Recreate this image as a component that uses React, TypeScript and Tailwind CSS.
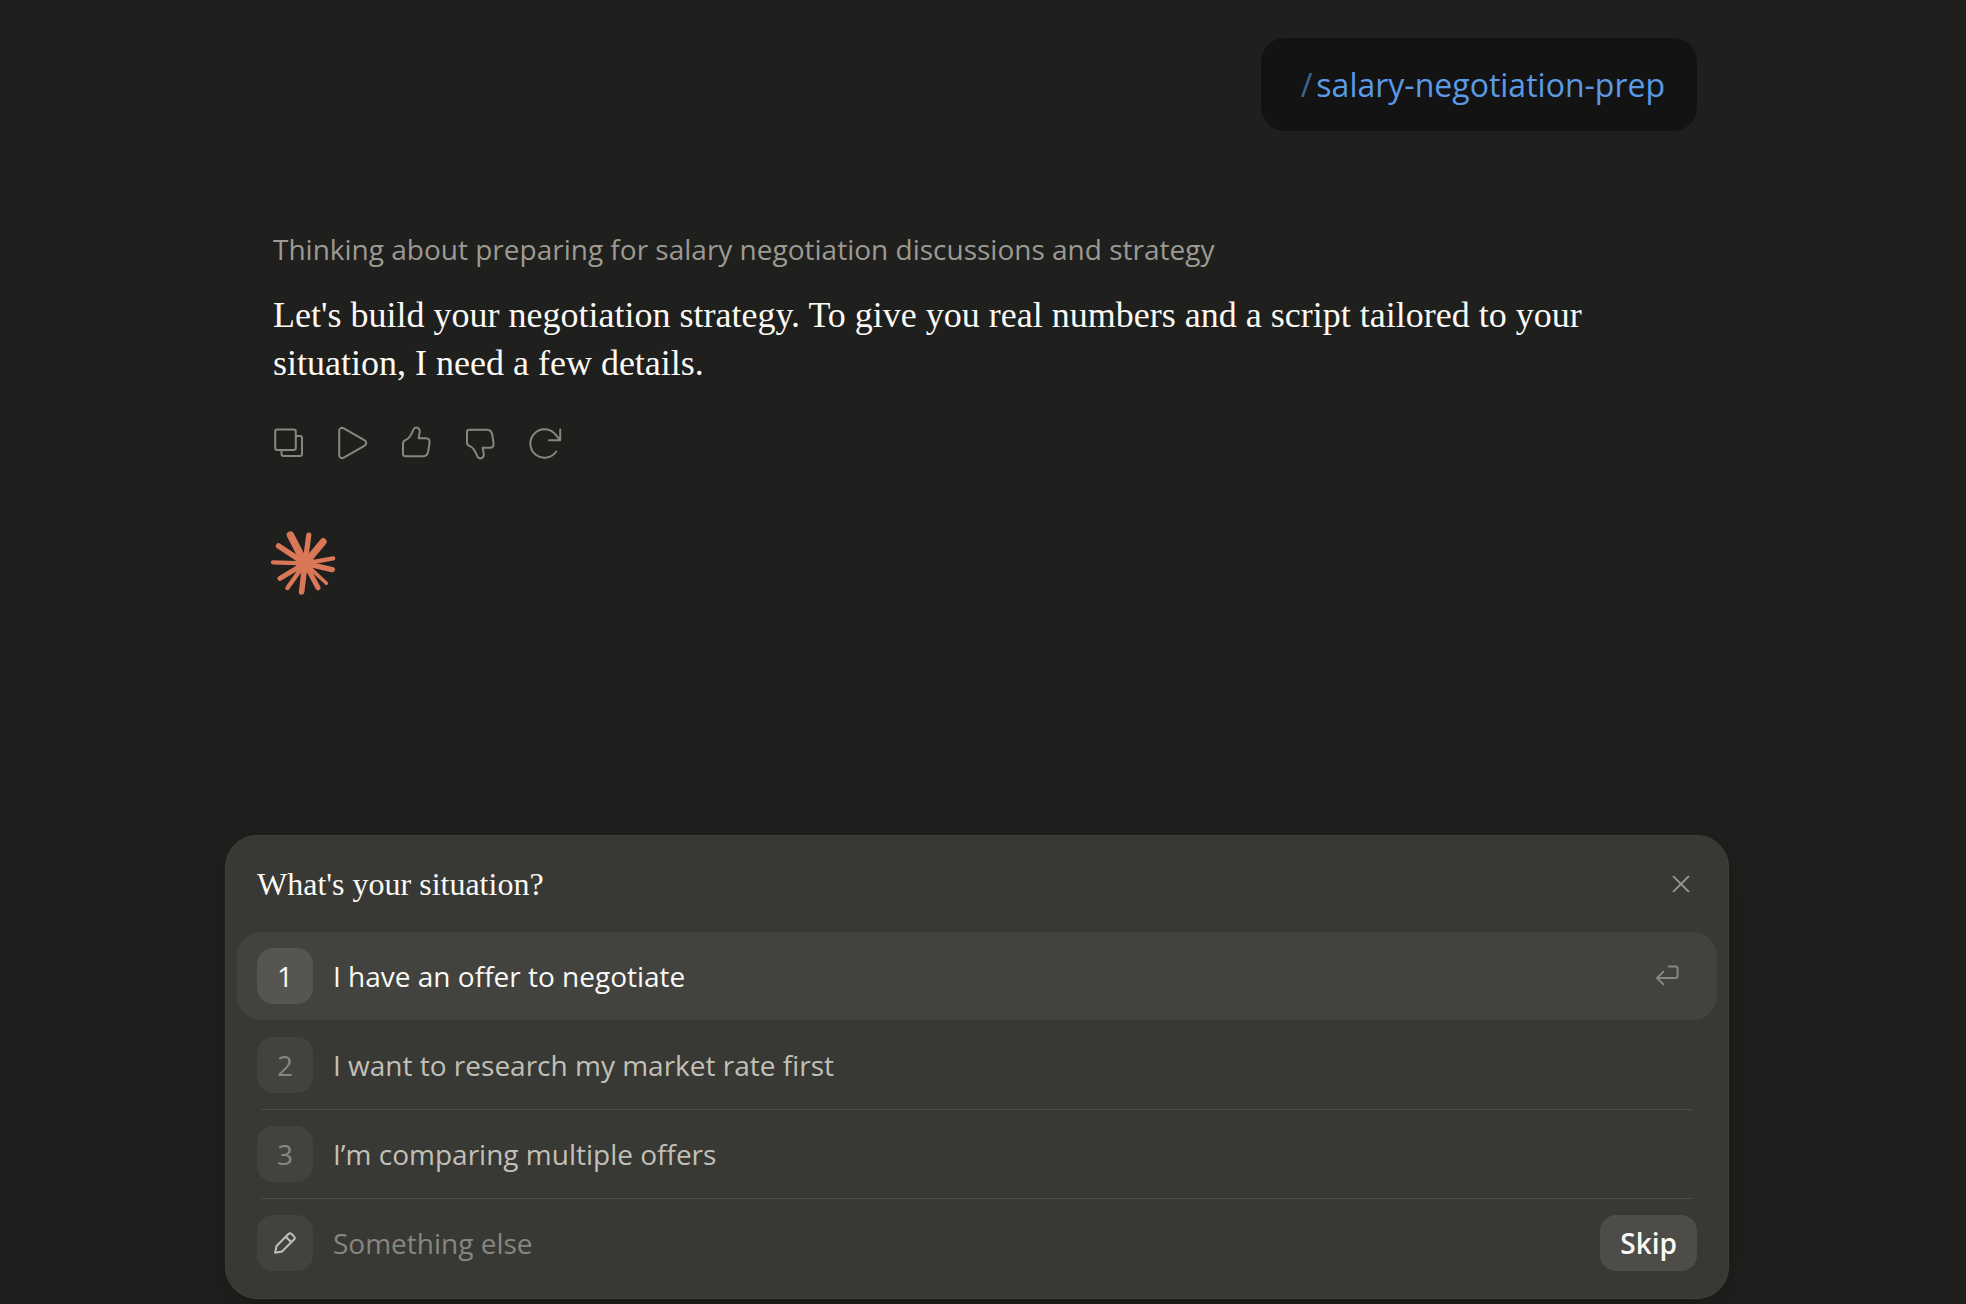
import React from 'react';

const OPTIONS = [
  { id: 1, label: 'I have an offer to negotiate' },
  { id: 2, label: 'I want to research my market rate first' },
  { id: 3, label: 'I\u2019m comparing multiple offers' },
];

const THUMB =
  'M2 27V16.5C2 14.4 3.4 13.2 5.4 12.6C8.6 11.4 10.4 7.4 12.4 2.6C13 1.2 14 .6 15.2 .6C18 .6 19.2 3 18.7 5.6L17.6 11.2H25C27.8 11.2 29 13.4 28.5 16.2L27.3 23.8C26.8 27.4 25 29.3 22 29.3H4.6C2.9 29.3 2 28.6 2 27Z';

const ACTIONS = [
  {
    label: 'Copy',
    icon: (
      <>
        <rect x="2.2" y="2.5" width="20.6" height="20.4" rx="2" />
        <path d="M23 9h4a2 2 0 0 1 2 2v16a2 2 0 0 1-2 2H10.5a2 2 0 0 1-2-2v-4" />
      </>
    ),
  },
  {
    label: 'Play',
    icon: (
      <path d="M2.2 3.8C2.2 1.2 4.6 .2 6.8 1.4L27.7 13.4C29.7 14.6 29.7 17.4 27.7 18.6L6.8 30.6C4.6 31.8 2.2 30.8 2.2 28.2Z" />
    ),
  },
  { label: 'Good response', icon: <path d={THUMB} /> },
  { label: 'Bad response', icon: <path d={THUMB} transform="matrix(1 0 0 -1 0 32)" /> },
  {
    label: 'Retry',
    icon: <path d="M27.3 24.5A14.2 14.2 0 1 1 25.7 6.6L31.2 13.2M31.2 2.4V13.2H20" />,
  },
];

// x, y of the tip and thickness of each ray
const RAYS = [
  [19.4, 4, 7.4],
  [37.8, 4.2, 5.2],
  [52.2, 10.8, 7],
  [62.2, 27.4, 4.2],
  [61.2, 38.6, 5.4],
  [55.4, 52.2, 3.6],
  [47, 56.8, 5],
  [30.6, 61, 5.6],
  [16.4, 57, 4.4],
  [9, 47.4, 5],
  [2, 31.4, 4.2],
  [7.6, 15, 5.6],
];

function Spark() {
  return (
    <svg viewBox="0 0 64 64" className="-ml-0.5 size-16 overflow-visible" stroke="#d97757" strokeLinecap="round">
      <circle cx="34" cy="32.4" r="9.4" fill="#d97757" stroke="none" />
      {RAYS.map(([x, y, w]) => (
        <line key={`${x}-${y}`} x1="34" y1="32.4" x2={x} y2={y} strokeWidth={w} />
      ))}
    </svg>
  );
}

function Message() {
  return (
    <div className="pl-4">
      <p className="text-[28px] leading-10 text-[#9c9a92]">
        Thinking about preparing for salary negotiation discussions and strategy
      </p>
      <p className="mt-[22px] font-['Liberation_Serif',serif] text-[36px] leading-12 text-[#faf9f5]">
        Let's build your negotiation strategy. To give you real numbers and a script tailored to your
        situation, I need a few details.
      </p>
      <div className="mt-6 -ml-4 flex">
        {ACTIONS.map(action => (
          <button key={action.label} aria-label={action.label} className="flex size-16 items-center justify-center">
            <svg
              viewBox="0 0 32 32"
              className="size-8 overflow-visible"
              fill="none"
              stroke="#87867f"
              strokeWidth="2"
              strokeLinecap="round"
              strokeLinejoin="round"
            >
              {action.icon}
            </svg>
          </button>
        ))}
      </div>
    </div>
  );
}

function QuestionPanel() {
  return (
    <section className="-mx-8 rounded-[32px] border border-[#40403b] bg-[#383834] px-[11px] pb-[11px] shadow-[0_8px_32px_rgba(0,0,0,0.2)]">
      <header className="flex h-24 items-center justify-between px-5">
        <h2 className="font-['Liberation_Serif',serif] text-[32px] leading-10 text-[#faf9f5]">
          What's your situation?
        </h2>
        <button aria-label="Close" className="flex size-8 items-center justify-center">
          <svg viewBox="0 0 16 16" className="size-4 overflow-visible" stroke="#97958c" strokeWidth="2" strokeLinecap="round">
            <path d="M.6 .6l14.8 14.8M15.4 .6L.6 15.4" />
          </svg>
        </button>
      </header>

      {OPTIONS.map((option, i) => {
        const active = i === 0;

        return (
          <React.Fragment key={option.id}>
            <button
              className={`flex h-22 w-full items-center gap-5 rounded-3xl px-5 text-left text-[28px] ${
                active ? 'bg-[#42423e] text-[#faf9f5]' : 'text-[#c2c0b6]'
              }`}
            >
              <span
                className={`flex size-14 items-center justify-center rounded-2xl ${
                  active ? 'bg-[#565551]' : 'bg-[#42423e] text-[#87867f]'
                }`}
              >
                {option.id}
              </span>
              <span className="grow">{option.label}</span>
              {active && (
                <svg
                  viewBox="0 0 24 24"
                  className="mr-4 size-6 overflow-visible"
                  fill="none"
                  stroke="#87867f"
                  strokeWidth="2"
                  strokeLinecap="round"
                  strokeLinejoin="round"
                >
                  <path d="M11.5 2.4H18.6A2 2 0 0 1 20.6 4.4V12A2 2 0 0 1 18.6 14H0M6.4 7.6L0 14L6.4 20.4" />
                </svg>
              )}
            </button>
            <div className={`mx-6 h-px ${active ? '' : 'bg-[#4c4c47]'}`} />
          </React.Fragment>
        );
      })}

      <div className="flex h-22 items-center gap-5 px-5 text-[28px]">
        <label
          htmlFor="other"
          aria-label="Something else"
          className="flex size-14 items-center justify-center rounded-2xl bg-[#42423e]"
        >
          <svg
            viewBox="0 0 24 24"
            className="size-6"
            fill="none"
            stroke="#c2c0b6"
            strokeWidth="2"
            strokeLinecap="round"
            strokeLinejoin="round"
          >
            <path d="M2.2 21.8L3.5 15L15.5 3A2.2 2.2 0 0 1 18.6 3L21 5.4A2.2 2.2 0 0 1 21 8.5L9 20.5L2.2 21.8ZM12.8 5.7L18.3 11.2" />
          </svg>
        </label>
        <input
          id="other"
          placeholder="Something else"
          className="min-w-0 grow bg-transparent outline-none placeholder:text-[#87867f]"
        />
        <button className="h-14 rounded-2xl bg-[#4d4c49] px-5 font-semibold text-[#faf9f5]">Skip</button>
      </div>
    </section>
  );
}

export default function App() {
  return (
    <div className="min-h-screen bg-[#1f1f1d] pr-3 font-['Open_Sans',sans-serif]">
      <main className="mx-auto flex min-h-screen max-w-[1440px] flex-col pt-[38px] pb-[5px]">
        <div className="self-end rounded-3xl bg-[#131313] py-6 pr-8 pl-10 text-[32px] leading-[45px] text-[#5a9ae6]">
          <span className="mr-1 opacity-60">/</span>
          salary-negotiation-prep
        </div>
        <div className="mt-[98px]">
          <Message />
        </div>
        <div className="mt-14 pl-4">
          <Spark />
        </div>
        <div className="mt-auto pt-12">
          <QuestionPanel />
        </div>
      </main>
    </div>
  );
}
